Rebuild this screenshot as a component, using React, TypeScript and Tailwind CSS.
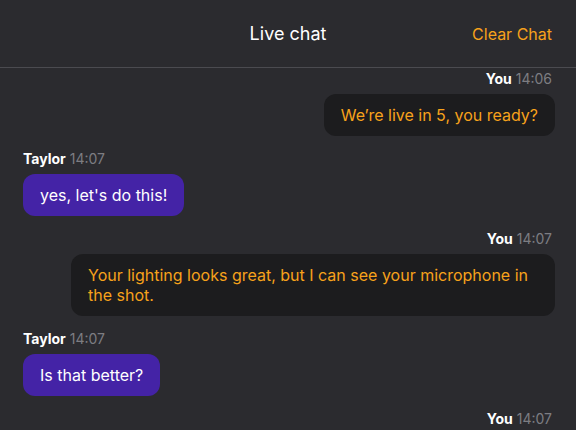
import React from "react";

type Msg = { from: "You" | "Taylor"; time: string; text?: string };

const MESSAGES: Msg[] = [
  { from: "You", time: "14:06", text: "We’re live in 5, you ready?" },
  { from: "Taylor", time: "14:07", text: "yes, let's do this!" },
  { from: "You", time: "14:07", text: "Your lighting looks great, but I can see your microphone in the shot." },
  { from: "Taylor", time: "14:07", text: "Is that better?" },
  { from: "You", time: "14:07" },
];

function Message({ msg }: { msg: Msg }) {
  const mine = msg.from === "You";
  return (
    <div className={mine ? "flex flex-col items-end" : "flex flex-col items-start"}>
      <div className={mine ? "text-[14px] leading-4 pr-[3px]" : "text-[14px] leading-4"}>
        <span className="font-bold text-white">{msg.from}</span>{" "}
        <span className="text-[#7d7d82]">{msg.time}</span>
      </div>
      {msg.text && (
        <div
          className={
            mine
              ? "mt-[7px] max-w-[484px] rounded-xl bg-[#1c1c1e] px-[17px] py-[11px] text-[16px] leading-5 text-[#f7a21b]"
              : "mt-[7px] max-w-[484px] rounded-xl bg-[#4423a6] px-[17px] py-[11px] text-[16px] leading-5 text-white"
          }
        >
          {msg.text}
        </div>
      )}
    </div>
  );
}

export default function App() {
  return (
    <div
      className="h-[430px] w-[576px] overflow-hidden bg-[#2b2b2f]"
      style={{ fontFamily: "Inter, 'Noto Sans', sans-serif" }}
    >
      {/* Header */}
      <div className="relative flex h-[68px] items-center justify-center border-b border-[#4b4b50]">
        <span className="text-[18px] text-white">Live chat</span>
        <button className="absolute right-6 text-[16px] text-[#f7a21b]">Clear Chat</button>
      </div>

      {/* Messages */}
      <div className="flex flex-col gap-[15px] pl-[23px] pr-[21px] pt-[3px]">
        {MESSAGES.map((m, i) => (
          <Message key={i} msg={m} />
        ))}
      </div>
    </div>
  );
}
